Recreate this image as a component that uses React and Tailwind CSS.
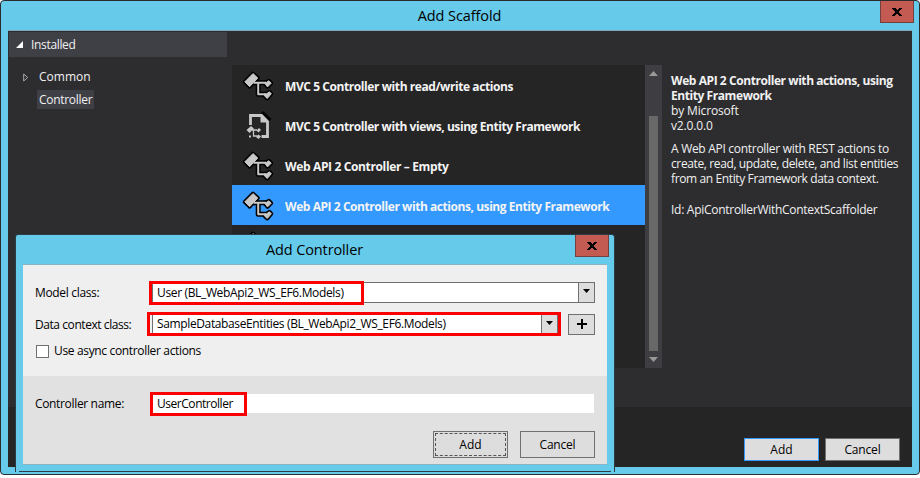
import React from "react";

function CloseButton() {
  return (
    <button className="flex h-[22px] w-[34px] items-center justify-center border border-t-0 border-[#74403f] bg-[#c35b52]">
      <svg width="10" height="8" viewBox="0 0 10 8" shapeRendering="crispEdges">
        <path d="M0 0h4v1h1v1h1V1h1V0h3v1H9v1H8v1H7v2h1v1h1v1h1v1H7V7H6V6H4v1H3v1H0V7h1V6h1V5h1V3H2V2H1V1H0z" fill="#000" />
      </svg>
    </button>
  );
}

function ControllerIcon() {
  const shapes = (
    <>
      <path d="M2.800 11.800 11 3.600l4.800 4.400-8.200 8.700z" />
      <path d="M22.200 12.500h2l2.800-1.700 2.200 2.400-3.700 3.700z" />
      <path d="M22.200 24h2l3.300-2.200 1.800 2-4 4.700-2.800-2.500z" />
    </>
  );
  return (
    <svg width="32" height="32" viewBox="0 0 32 32" strokeLinejoin="round">
      <g fill="#000" stroke="#000" strokeWidth="4">{shapes}</g>
      <path d="M11 12.700h13M16.200 12.700v11.500h7" fill="none" stroke="#000" strokeWidth="5" />
      <g fill="#c8c8c8" stroke="#c8c8c8" strokeWidth="1">{shapes}</g>
      <path d="M11.500 12.700H24M16.200 12.700v11.500H24" fill="none" stroke="#c8c8c8" strokeWidth="2" />
    </svg>
  );
}

function ViewsIcon() {
  return (
    <svg width="32" height="32" viewBox="0 0 32 32">
      <path d="M20 2 28.500 10" stroke="#000" strokeWidth="3" />
      <path d="M8.500 15V5.500h11l6 6V26.500h-6" fill="none" stroke="#c8c8c8" strokeWidth="2.800" />
      <path d="M18.500 4.500v8h8z" fill="#c8c8c8" />
      <g fill="#c8c8c8">
        <path d="m4.500 20 4.500-4 3 2.500-4.500 4.500z" />
        <path d="m14.500 20.500 2.500-2.500 2 2-2.500 2.500zM14 27l2.500-2.500 2.500 2-2.500 2.500zM7 25.500h2v2h-2z" />
        <path d="M10 20h5M11.500 20v6h4" fill="none" stroke="#c8c8c8" strokeWidth="1.300" />
      </g>
    </svg>
  );
}

const scaffolds = [
  { label: "MVC 5 Controller with read/write actions", track: "tracking-[-0.42px]", Icon: ControllerIcon },
  { label: "MVC 5 Controller with views, using Entity Framework", track: "tracking-[-0.43px]", Icon: ViewsIcon },
  { label: "Web API 2 Controller – Empty", track: "tracking-[-0.36px]", Icon: ControllerIcon },
  { label: "Web API 2 Controller with actions, using Entity Framework", track: "tracking-[-0.44px]", Icon: ControllerIcon, selected: true },
  { label: "", track: "", Icon: ControllerIcon },
];

function ScaffoldList() {
  return (
    <div className="flex h-[303px] w-[430px]">
      <ul className="w-[413px] overflow-hidden bg-[#252526]">
        {scaffolds.map(({ label, track, Icon, selected }, i) => (
          <li key={i} className={`flex h-10 items-center gap-[11px] pl-[10px] pt-[2px] ${selected ? "bg-[#3399ff]" : ""}`}>
            <Icon />
            <span className={`whitespace-nowrap pt-px font-bold text-[#f4f4f4] ${track}`}>{label}</span>
          </li>
        ))}
      </ul>
      <div className="flex w-[17px] flex-col items-center bg-[#3e3e42] pt-[6px] pb-[6px]">
        <svg width="9" height="5" viewBox="0 0 9 5"><path d="M4.500 0 9 5H0z" fill="#999" /></svg>
        <div className="mt-10 h-[235px] w-[9px] bg-[#686868]" />
        <svg className="mt-[6px]" width="9" height="5" viewBox="0 0 9 5"><path d="M0 0h9L4.500 5z" fill="#999" /></svg>
      </div>
    </div>
  );
}

function Details() {
  return (
    <div className="ml-[9px] mt-[8px] whitespace-nowrap leading-[15px] text-[#f1f1f1]">
      <div className="font-bold tracking-[-0.43px]">
        <p>Web API 2 Controller with actions, using</p>
        <p>Entity Framework</p>
      </div>
      <p className="tracking-[-0.15px]">by Microsoft</p>
      <p className="tracking-[-0.15px]">v2.0.0.0</p>
      <div className="mt-2 tracking-[-0.38px]">
        <p className="tracking-[-0.29px]">A Web API controller with REST actions to</p>
        <p>create, read, update, delete, and list entities</p>
        <p>from an Entity Framework data context.</p>
      </div>
      <p className="mt-4 tracking-[-0.28px]">Id: ApiControllerWithContextScaffolder</p>
    </div>
  );
}

function Arrow() {
  return (
    <span className="flex h-full w-[16px] items-center justify-center border-l border-[#707070] bg-[#dddddd] pb-[2px]">
      <svg width="7" height="4" viewBox="0 0 7 4"><path d="M0 0h7L3.500 4z" fill="#000" /></svg>
    </span>
  );
}

function AddController() {
  return (
    <section className="absolute left-[14px] top-[233px] h-[238px] w-[600px] rounded-t-[3px] border border-b-0 border-[#2b3c44] bg-[#66caea] text-black">
      <header className="flex h-[29px] items-start justify-end pr-[5px]">
        <h2 className="flex-1 pl-[38px] pt-[4px] text-center text-[14.500px] leading-[22px] tracking-[-0.12px]">Add Controller</h2>
        <CloseButton />
      </header>
      <div className="ml-[7px] h-[201px] w-[584px] border-b border-t border-[#8ab4c2] bg-[#e1e1e1]">
        <div className="h-[111px] bg-[#efefef] pl-3 pt-[16px]">
          <div className="flex h-[22px] items-center">
            <label className="w-[117px] pt-px tracking-[-0.33px]">Model class:</label>
            <div className="flex h-[21px] w-[443px] items-center border border-[#707070] bg-white">
              <span className="flex-1 pl-[4px] pt-px tracking-[-0.35px]">User (BL_WebApi2_WS_EF6.Models)</span>
              <Arrow />
            </div>
          </div>
          <div className="mt-[10px] flex h-[22px] items-center">
            <label className="w-[117px] pt-px tracking-[-0.43px]">Data context class:</label>
            <div className="flex h-[22px] w-[406px] items-center border border-[#707070] bg-white">
              <span className="flex-1 pl-[4px] tracking-[-0.37px]">SampleDatabaseEntities (BL_WebApi2_WS_EF6.Models)</span>
              <Arrow />
            </div>
            <button className="ml-[10px] flex h-[21px] w-[27px] items-center justify-center border border-[#707070] bg-[#dddddd]">
              <svg width="10" height="10" viewBox="0 0 10 10"><path d="M4 0h2v4h4v2H6v4H4V6H0V4h4z" /></svg>
            </button>
          </div>
          <div className="mt-[9px] flex h-[14px] items-center gap-[5px]">
            <span className="ml-px h-[13px] w-[13px] border border-[#707070] bg-white" />
            <span className="tracking-[-0.34px]">Use async controller actions</span>
          </div>
        </div>
        <div className="pl-3 pt-[17px]">
          <div className="flex h-[20px] items-center">
            <label className="w-[117px] pt-px tracking-[-0.34px]">Controller name:</label>
            <div className="flex h-[19px] w-[442px] items-center bg-white pl-[5px] pt-px tracking-[-0.46px]">UserController</div>
          </div>
          <div className="mt-[18px] flex gap-[12px] pl-[398px]">
            <button className="h-[27px] w-[75px] border border-[#707070] bg-[#dddddd] p-px">
              <span className="flex h-full items-center justify-center border border-dashed border-[#555]">Add</span>
            </button>
            <button className="h-[27px] w-[75px] border border-[#707070] bg-[#dddddd] tracking-[-0.2px]">Cancel</button>
          </div>
        </div>
      </div>
      <div className="mx-[3px] mt-[6px] h-px bg-[#2b3c44]" />
      <div className="absolute left-[133px] top-[46px] h-[24px] w-[215px] border-[3px] border-[#fc0000]" />
      <div className="absolute left-[131px] top-[77px] h-[24px] w-[414px] border-[3px] border-[#fc0000]" />
      <div className="absolute left-[134px] top-[157px] h-[24px] w-[97px] border-[3px] border-[#fc0000]" />
    </section>
  );
}

export default function App() {
  return (
    <div className="h-[478px] w-[920px] overflow-hidden bg-white font-['Open_Sans','Noto_Sans',sans-serif] text-[12px] leading-[16px]">
      <main className="relative h-[475px] w-[920px] rounded-[4px] border border-[#2b2b30] bg-[#66caea]">
        <header className="flex h-[29px] items-start pr-[5px]">
          <h1 className="flex-1 pl-[38px] pt-[4px] text-center text-[14.500px] leading-[22px] tracking-[-0.1px] text-black">Add Scaffold</h1>
          <CloseButton />
        </header>
        <div className="ml-[7px] flex h-[437px] w-[904px] flex-col border-t border-[#7fa6b5] bg-[#2d2d30]">
          <div className="flex h-[376px]">
            <nav className="ml-px mt-px w-[218px] text-[#f1f1f1]">
              <div className="flex h-[25px] items-center bg-[#3f3f46] pl-[7px]">
                <svg width="7" height="7" viewBox="0 0 7 7"><path d="M7 0v7H0z" fill="#fff" /></svg>
                <span className="ml-[8px] pt-px tracking-[-0.33px]">Installed</span>
              </div>
              <div className="mt-[12px] flex h-[16px] items-center pl-[14px]">
                <svg width="6" height="9" viewBox="0 0 6 9"><path d="M.7 1v7l4-3.500z" fill="none" stroke="#aaa" /></svg>
                <span className="ml-[10px]">Common</span>
              </div>
              <div className="ml-[28px] mt-[5px] flex h-[19px] w-[57px] items-center bg-[#3f3f46] pl-[2px] pt-px tracking-[-0.3px]">Controller</div>
            </nav>
            <div className="ml-[5px] mt-[34px] flex">
              <ScaffoldList />
              <Details />
            </div>
          </div>
          <footer className="flex flex-1 items-start justify-end gap-[6px] bg-[#252526] pr-[12px] pt-[31px] text-black">
            <button className="h-[23px] w-[75px] border border-[#3399ff] bg-[#dddddd]">Add</button>
            <button className="h-[23px] w-[75px] border border-[#707070] bg-[#dddddd] tracking-[-0.15px]">Cancel</button>
          </footer>
        </div>
        <AddController />
      </main>
    </div>
  );
}
